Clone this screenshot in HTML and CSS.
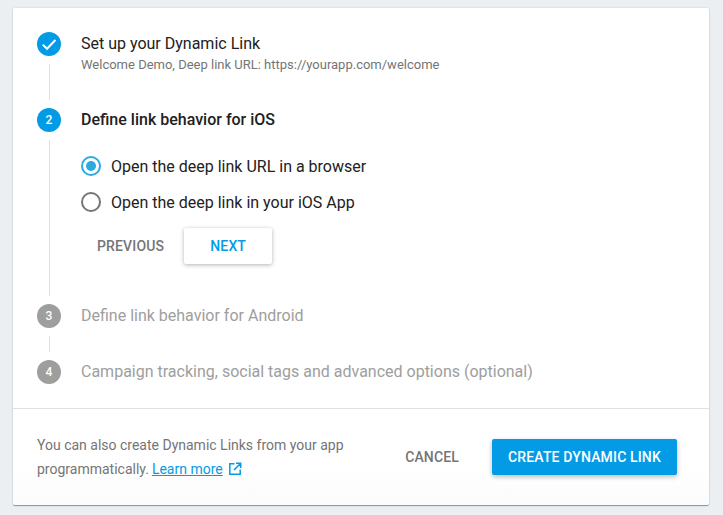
FILE: index.html
```html
<!DOCTYPE html>
<html lang="en">
<head>
<meta charset="utf-8">
<title>Dynamic Link</title>
<link rel="stylesheet" href="styles.css">
</head>
<body>
<main class="card">
  <section class="stepper">
    <div class="step step-one">
      <div class="rail">
        <span class="badge badge-active">
          <svg class="check" viewBox="0 0 24 24" width="24" height="24"><path d="M5.8 12.6l4.2 4.2 8.4-8.8" fill="none" stroke="#fff" stroke-width="2"/></svg>
        </span>
        <span class="line"></span>
      </div>
      <div class="body">
        <h2 class="title">Set up your Dynamic Link</h2>
        <p class="summary">Welcome Demo, Deep link URL: https://yourapp.com/welcome</p>
      </div>
    </div>
    <div class="step step-two">
      <div class="rail">
        <span class="badge badge-active">2</span>
        <span class="line"></span>
      </div>
      <div class="body">
        <h2 class="title title-strong">Define link behavior for iOS</h2>
        <div class="options">
          <div class="option"><span class="radio radio-on"></span><span>Open the deep link URL in a browser</span></div>
          <div class="option"><span class="radio"></span><span>Open the deep link in your iOS App</span></div>
        </div>
        <div class="actions">
          <span class="btn btn-flat">PREVIOUS</span>
          <span class="btn btn-raised">NEXT</span>
        </div>
      </div>
    </div>
    <div class="step step-three">
      <div class="rail">
        <span class="badge">3</span>
        <span class="line"></span>
      </div>
      <div class="body"><h2 class="title title-muted">Define link behavior for Android</h2></div>
    </div>
    <div class="step step-four">
      <div class="rail"><span class="badge">4</span></div>
      <div class="body"><h2 class="title title-muted">Campaign tracking, social tags and advanced options (optional)</h2></div>
    </div>
  </section>
  <footer class="footer">
    <div class="note">
      <div>You can also create Dynamic Links from your app</div>
      <div class="note-line"><span>programmatically.</span><a class="learn" href="#">Learn more</a><svg class="ext" viewBox="0 0 14 14" width="14" height="14"><path d="M6.5 1.8H1.8v10.4h10.4V7.5M8 1.3h4.7V6M12.5 1.5L6 8" fill="none" stroke="#039be5" stroke-width="1.5"/></svg></div>
    </div>
    <div class="footer-actions">
      <span class="btn btn-cancel">CANCEL</span>
      <span class="btn btn-primary">CREATE DYNAMIC LINK</span>
    </div>
  </footer>
</main>
</body>
</html>
```
FILE: styles.css
```css
* { box-sizing: border-box; }
html, body { height: 100%; }
body {
  margin: 0;
  padding: 8px 14px 10px 13px;
  background: #eceff1;
  font-family: Roboto, "Liberation Sans", sans-serif;
  overflow: hidden;
}
.card {
  width: 696px;
  height: 497px;
  background: linear-gradient(#fff 93%, #fbfbfb);
  border-radius: 2px;
  box-shadow: 0 1px 1px rgba(0,0,0,.38), 0 0 2px rgba(0,0,0,.16);
  display: flex;
  flex-direction: column;
}
.stepper { padding: 24px 24px 0; height: 400px; }
.step { display: flex; gap: 20px; }
.step-one { height: 76px; }
.step-two { height: 196px; }
.step-three { height: 56px; }
.step-four { height: 24px; }
.rail { width: 24px; display: flex; flex-direction: column; align-items: center; }
.badge {
  width: 24px; height: 24px; flex: none;
  border-radius: 50%;
  background: #9e9e9e;
  color: #fff;
  font-size: 12px;
  font-weight: 500;
  display: flex; align-items: center; justify-content: center;
}
.badge-active { background: #039be5; }
.line { width: 1px; flex: 1; margin: 8px 0; background: #e0e0e0; }
.body { flex: 1; min-width: 0; }
.title {
  margin: 0;
  font-size: 16px;
  font-weight: 400;
  line-height: 24px;
  color: #212121;
}
.title-strong { font-weight: 500; }
.title-muted { color: #9e9e9e; }
.summary { margin: 0; font-size: 13px; line-height: 18px; color: #757575; }
.options { padding-top: 24px; display: flex; flex-direction: column; gap: 16px; }
.option { display: flex; align-items: center; gap: 10px; height: 20px; font-size: 16px; color: #212121; }
.radio { width: 20px; height: 20px; border: 2px solid #757575; border-radius: 50%; flex: none; display: flex; align-items: center; justify-content: center; }
.radio-on { border-color: #29abe2; }
.radio-on::after { content: ""; width: 10px; height: 10px; border-radius: 50%; background: #29abe2; }
.actions { display: flex; gap: 4px; margin-top: 16px; }
.btn {
  display: inline-flex; align-items: center; justify-content: center;
  height: 36px;
  padding: 0 16px;
  font-size: 14px;
  font-weight: 500;
  letter-spacing: .15px;
  border-radius: 2px;
}
.btn-flat, .btn-cancel { color: #757575; }
.btn-raised { width: 88px; color: #039be5; background: #fff; box-shadow: 0 1px 4px rgba(0,0,0,.3); }
.footer {
  flex: 1;
  border-top: 1px solid #e0e0e0;
  padding: 24px 32px 0 24px;
  display: flex;
  justify-content: space-between;
}
.note { width: 330px; font-size: 14px; line-height: 24px; color: #757575; }
.note-line { display: flex; align-items: center; gap: 3px; }
.learn { color: #039be5; }
.ext { margin-left: 2px; }
.footer-actions { display: flex; align-items: flex-start; padding-top: 6px; }
.btn-cancel { margin-right: 17px; }
.btn-primary { width: 185px; background: #039be5; color: #fff; box-shadow: 0 2px 5px rgba(0,0,0,.26); }
```
